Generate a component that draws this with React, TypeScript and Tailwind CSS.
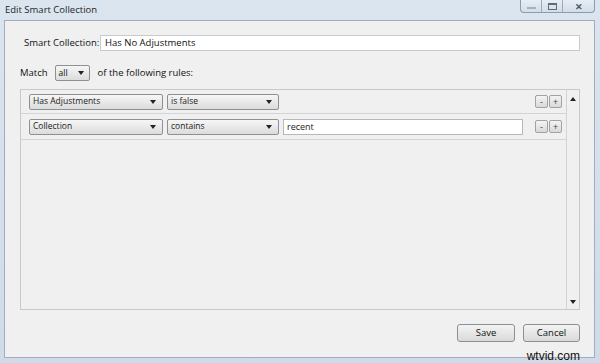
import React from "react";

const font = { fontFamily: '"Open Sans", "Noto Sans", "Liberation Sans", sans-serif' };

function Arrow({ up }: { up?: boolean }) {
  return (
    <svg width="6" height="4" viewBox="0 0 6 4" className="block">
      <path d={up ? "M0 4 L3 0 L6 4 Z" : "M0 0 L6 0 L3 4 Z"} fill="#222" />
    </svg>
  );
}

function Select({ label, width }: { label: string; width: string }) {
  return (
    <div
      className={`${width} h-[16px] flex items-center justify-between pl-[3px] pr-[6px] border border-[#8f9092] rounded-[2px] bg-gradient-to-b from-[#f6f6f6] to-[#dcdcdc] text-[8.5px] text-[#222]`}
    >
      <span className="leading-none">{label}</span>
      <Arrow />
    </div>
  );
}

function SmallButton({ children }: { children: React.ReactNode }) {
  return (
    <div className="w-[13px] h-[13px] flex items-center justify-center border border-[#a2a2a2] rounded-[2px] bg-gradient-to-b from-[#f4f4f4] to-[#d9d9d9] text-[9px] leading-none text-[#444]">
      {children}
    </div>
  );
}

function RuleRow({
  field,
  op,
  value,
  height,
}: {
  field: string;
  op: string;
  value?: string;
  height: string;
}) {
  return (
    <div className={`${height} flex items-center pl-[8px] pr-[4px] border-b border-[#d4d4d4]`}>
      <Select label={field} width="w-[134px]" />
      <div className="w-[4px]" />
      <Select label={op} width="w-[112px]" />
      {value !== undefined && (
        <div className="ml-[4px] w-[240px] h-[16px] flex items-center pl-[3px] bg-white border border-[#b5b8bd] text-[9px] text-[#222]">
          {value}
        </div>
      )}
      <div className="flex-1" />
      <div className="flex gap-[1px]">
        <SmallButton>-</SmallButton>
        <SmallButton>+</SmallButton>
      </div>
    </div>
  );
}

export default function App() {
  return (
    <div className="relative w-[600px] h-[363px] bg-gradient-to-b from-[#dbe5f0] to-[#cfdbe8] flex flex-col overflow-hidden" style={font}>
      {/* Title bar */}
      <div className="h-[20px] flex items-start justify-between">
        <div className="pl-[5px] pt-[3px] text-[9.5px] text-[#1e1e1e]">Edit Smart Collection</div>
        <div className="mr-[5px] flex h-[13px] border border-t-0 border-[#8d9bad] rounded-b-[4px] bg-gradient-to-b from-[#e6edf5] to-[#d3dde9]">
          <div className="w-[21px] flex items-center justify-center border-r border-[#9daabb]">
            <div className="w-[9px] h-[2px] mt-[4px] bg-[#a7b0bc]" />
          </div>
          <div className="w-[21px] flex items-center justify-center border-r border-[#9daabb]">
            <div className="w-[9px] h-[7px] border border-[#5f6a78] border-t-2" />
          </div>
          <div className="w-[31px] flex items-center justify-center text-[9px] leading-none font-bold text-[#4c5563]">
            ✕
          </div>
        </div>
      </div>

      {/* Body */}
      <div className="ml-[4px] mr-[5px] mb-[5px] flex-1 bg-[#f0f0f0] border border-[#a3adb9] flex flex-col pl-[15px] pr-[14px]">
        {/* Smart collection name */}
        <div className="mt-[14px] h-[16px] flex items-center">
          <span className="ml-[4px] w-[76px] whitespace-nowrap text-[9.5px] text-[#111]">Smart Collection:</span>
          <div className="flex-1 h-[16px] flex items-center pl-[4px] bg-white border border-[#c7cacf] text-[9.5px] text-[#111]">
            Has No Adjustments
          </div>
        </div>

        {/* Match */}
        <div className="mt-[14px] h-[16px] flex items-center text-[9.5px] text-[#111]">
          <span>Match</span>
          <div className="ml-[7px] w-[35px] h-[16px] flex items-center justify-between pl-[3px] pr-[5px] border border-[#8f9092] rounded-[2px] bg-gradient-to-b from-[#f6f6f6] to-[#dcdcdc] text-[8.5px]">
            <span className="leading-none">all</span>
            <Arrow />
          </div>
          <span className="ml-[8px]">of the following rules:</span>
        </div>

        {/* Rules panel */}
        <div className="mt-[8px] h-[221px] flex border border-[#c9c9c9] bg-[#f0f0f0]">
          <div className="flex-1 flex flex-col border-r border-[#d4d4d4]">
            <RuleRow field="Has Adjustments" op="is false" height="h-[24px]" />
            <RuleRow field="Collection" op="contains" value="recent" height="h-[26px]" />
          </div>
          <div className="w-[12px] flex flex-col items-center justify-between pt-[7px] pb-[5px]">
            <Arrow up />
            <Arrow />
          </div>
        </div>

        {/* Buttons */}
        <div className="mt-[14px] flex justify-end gap-[8px]">
          <div className="w-[58px] h-[18px] flex items-center justify-center border border-[#8e8f8f] rounded-[3px] bg-gradient-to-b from-[#f3f3f3] to-[#dadada] text-[9.5px] text-[#111]">
            Save
          </div>
          <div className="w-[57px] h-[18px] flex items-center justify-center border border-[#8e8f8f] rounded-[3px] bg-gradient-to-b from-[#f3f3f3] to-[#dadada] text-[9.5px] text-[#111]">
            Cancel
          </div>
        </div>
      </div>

      {/* Watermark */}
      <div
        className="absolute right-[20px] bottom-[1px] text-[12px] leading-none text-[#111]"
        style={{ fontFamily: '"Liberation Sans", Arial, sans-serif' }}
      >
        wtvid.com
      </div>
    </div>
  );
}
